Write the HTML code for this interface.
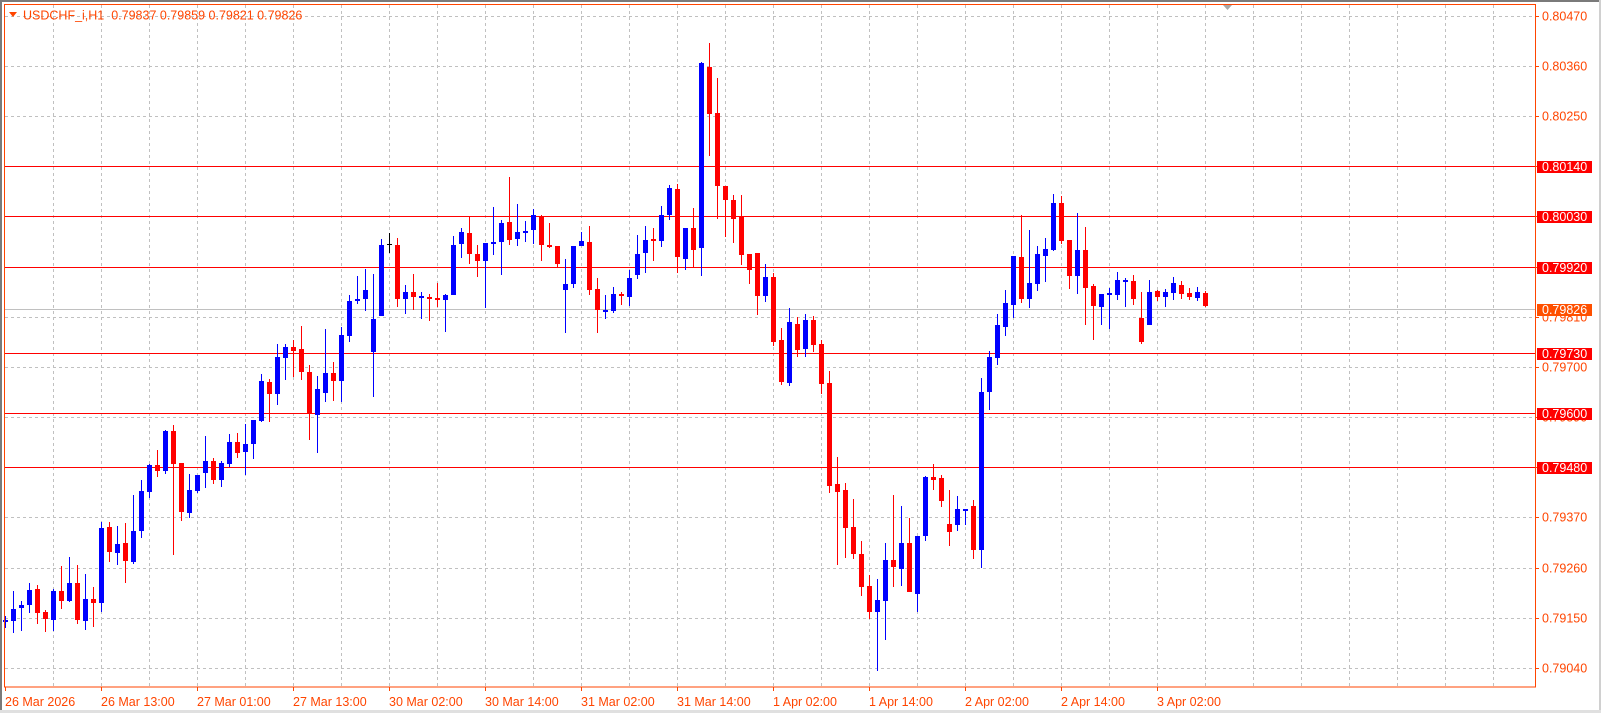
<!DOCTYPE html>
<html><head><meta charset="utf-8">
<style>
html,body{margin:0;padding:0;background:#fff;width:1601px;height:713px;overflow:hidden}
svg{display:block}
text{font-family:"Liberation Sans",sans-serif;font-size:12.5px}
</style></head>
<body>
<svg id="s" width="1601" height="713" xmlns="http://www.w3.org/2000/svg">
<rect x="0" y="0" width="1601" height="713" fill="#fff"/>
<rect x="0" y="0" width="1601" height="2" fill="#7a7a7a"/>
<rect x="0" y="0" width="2" height="713" fill="#7a7a7a"/>
<rect x="1599" y="0" width="2" height="713" fill="#d0d0d0"/>
<rect x="0" y="710" width="1601" height="3" fill="#e0e0e0"/>
<g id="grid"></g>
<g id="lines"></g>
<g id="candles"></g>
<rect x="4.5" y="4.5" width="1531" height="682.5" fill="none" stroke="#FF4500" stroke-width="1"/>
<polygon points="1223,5 1232,5 1227.5,10" fill="#a8a8a8"/>
<polygon points="9,12 17,12 13,17" fill="#FF4500"/>
<text x="23" y="19.5" fill="#FF4500">USDCHF_i,H1&#160;&#160;0.79837 0.79859 0.79821 0.79826</text>
<g id="axis"></g>
</svg>
<script>
var NS="http://www.w3.org/2000/svg";
function el(p,t,a,txt){var e=document.createElementNS(NS,t);for(var k in a)e.setAttribute(k,a[k]);if(txt!=null)e.textContent=txt;document.getElementById(p).appendChild(e);return e;}
function py(p){return 15.7+(0.80470-p)*45618;}
// grid
for(var x=53;x<1535;x+=48){el('grid','line',{x1:x+0.5,y1:5,x2:x+0.5,y2:687,stroke:'#c0c0c0','stroke-dasharray':'3,3'});}
var prices=[];
for(var k=0;k<14;k++){var p=0.80470-0.0011*k;prices.push(p);var y=Math.round(py(p))+0.5;
el('grid','line',{x1:5,y1:y,x2:1535,y2:y,stroke:'#c0c0c0','stroke-dasharray':'3,3'});}
// horizontal red lines
var red=[0.80140,0.80030,0.79920,0.79730,0.79600,0.79480];
red.forEach(function(p){var y=Math.round(py(p))+0.5;el('lines','line',{x1:5,y1:y,x2:1535,y2:y,stroke:'#FF0000','stroke-width':1});});
el('lines','line',{x1:5,y1:309.5,x2:1535,y2:309.5,stroke:'#c0c0c0','stroke-width':1});
// candles
var Z={
z4:function(v){return 266.6+(v-138)*0.3323;},
z5:function(v){return 166.2+(v-16)*0.3325;},
z6:function(v){return 166.2+(v-331)*0.4069;},
z7:function(v){return 216.4+(v-109)*0.3336;},
z8:function(v){return 467.3+(v-81)/3;},
z9:function(v){return 266.6+(v-18)/3;}
};
var D=[
['z4',[[1207,1190,1225,1203],[1205,1113,1240,1167],[1165,1143,1235,1155],[1157,1090,1180,1110],[1107,1095,1215,1181],[1176,1170,1238,1199],[1201,1108,1236,1113],[1113,1038,1168,1145],[1145,1011,1148,1089],[1089,1035,1215,1202],[1205,1062,1232,1137],[1137,1101,1223,1151],[1151,908,1176,924],[921,908,1028,998],[1001,920,1035,972],[969,911,1091,1025],[1028,824,1034,933],[935,779,956,813],[815,731,833,735],[735,689,770,752],[752,630,761,633],[633,615,1007,731],[729,729,905,875],[881,762,896,809],[812,764,818,764],[758,647,803,722],[722,713,791,779],[779,722,800,728],[731,641,740,665],[665,638,713,698],[695,611,764,671],[671,599,716,599],[602,461,605,482],[486,476,605,521],[521,371,554,410],[413,371,479,380],[380,359,470,392]]],
['z5',[[567,497,659,635],[636,615,839,761],[764,648,878,685],[698,507,725,639],[639,606,722,662],[662,500,725,525],[527,402,545,420],[422,347,431,414],[416,326,452,387],[575,341,710,477],[467,234,467,252],[250,218,278,250,'k'],[252,231,440,416],[416,372,461,393],[393,339,449,410],[410,393,476,405],[408,399,482,416],[413,366,440,419],[419,399,515,402],[404,225,404,252],[251,201,293,213],[216,170,311,281],[279,252,350,302],[302,246,443,246],[247,138,284,243],[245,177,344,186],[183,48,254,239],[236,129,257,213],[215,180,245,210],[209,144,251,162],[165,162,302,254],[252,186,263,257],[255,255,323,311],[389,294,518,369],[371,255,383,255],[257,213,257,240],[243,195,404,389],[384,351,518,449]]],
['z6',[[686,647,707,684],[686,629,692,644],[644,641,671,650],[653,586,674,605],[599,500,608,546],[545,479,593,512],[510,482,563,514],[514,428,529,451],[452,376,464,385],[387,375,593,555],[558,483,587,483],[483,433,578,538],[533,75,602,78],[88,27,305,202],[201,115,460,380],[380,380,505,415],[414,402,519,460],[457,402,575,550],[546,546,621,587],[544,544,697,651],[651,571,665,603],[603,593,773,763],[757,728,869,861],[864,679,871,715],[718,701,800,783],[781,695,800,708],[708,698,788,771],[769,759,891,866],[865,835,1133,1116],[1112,1046,1310,1131],[1127,1110,1295,1219],[1218,1150,1297,1283],[1284,1253,1388,1364],[1362,1335,1443,1427],[1427,1346,1571,1396],[1400,1256,1496,1298],[1298,1138,1364,1317]]],
['z8',[[386,198,437,309],[309,232,455,455],[461,286,516,286],[288,108,302,111],[111,72,150,119],[114,104,200,183],[252,150,318,276],[254,168,272,207],[206,206,255,205],[198,180,356,329]]],
['z7',[[1109,594,1164,636],[635,513,689,531],[533,402,554,435],[440,330,467,369],[374,228,413,228],[231,104,368,356],[356,150,383,309],[311,198,333,222],[227,174,305,207],[210,42,213,69],[69,48,192,183],[180,180,326,287],[287,100,341,210],[210,141,434,323],[318,312,479,377],[380,342,434,342],[341,324,446,339],[344,276,359,300],[301,293,380,299],[303,285,374,356],[414,336,491,485],[434,300,434,336],[333,330,364,350],[350,327,380,336],[338,291,359,309],[315,303,356,341],[339,324,359,350],[353,321,362,336]]],
['z9',[[96,90,140,137]]]
];
var i=0;
D.forEach(function(g){var f=Z[g[0]];g[1].forEach(function(c){
var o=f(c[0]),h=f(c[1]),l=f(c[2]),cl=f(c[3]);
var col=c[4]==='k'?'#000':(cl>o+0.3?'#FF0000':'#0000FF');
var cx=5+8*i;
var top=Math.min(h,o,cl),bot=Math.max(l,o,cl);
el('candles','rect',{x:cx,y:Math.round(top),width:1,height:Math.max(1,Math.round(bot)-Math.round(top)),fill:col});
var bt=Math.round(Math.min(o,cl)),bb=Math.round(Math.max(o,cl));
if(c[4]==='k'){el('candles','rect',{x:cx-2,y:bt,width:5,height:1,fill:col});}
else el('candles','rect',{x:cx-2,y:bt,width:5,height:Math.max(2,bb-bt),fill:col});
i++;});});
// axis labels
prices.forEach(function(p){var y=Math.round(py(p));
el('axis','rect',{x:1535,y:y,width:4,height:1,fill:'#FF4500'});
el('axis','text',{x:1542,y:y+4.5,fill:'#FF4500'},p.toFixed(5));});
red.forEach(function(p){var y=Math.round(py(p));
el('axis','rect',{x:1537,y:y-5,width:55,height:12,fill:'#FF0000'});
el('axis','text',{x:1542,y:y+5,fill:'#fff'},p.toFixed(5));});
el('axis','rect',{x:1537,y:304,width:55,height:12,fill:'#FF5000'});
el('axis','text',{x:1542,y:314,fill:'#fff'},'0.79826');
// time labels
var tl=['26 Mar 2026','26 Mar 13:00','27 Mar 01:00','27 Mar 13:00','30 Mar 02:00','30 Mar 14:00','31 Mar 02:00','31 Mar 14:00','1 Apr 02:00','1 Apr 14:00','2 Apr 02:00','2 Apr 14:00','3 Apr 02:00'];
tl.forEach(function(t,k){var x=5+96*k;
el('axis','rect',{x:x,y:687,width:1,height:4,fill:'#FF4500'});
el('axis','text',{x:x,y:706,fill:'#FF4500'},t);});
</script>
</body></html>
